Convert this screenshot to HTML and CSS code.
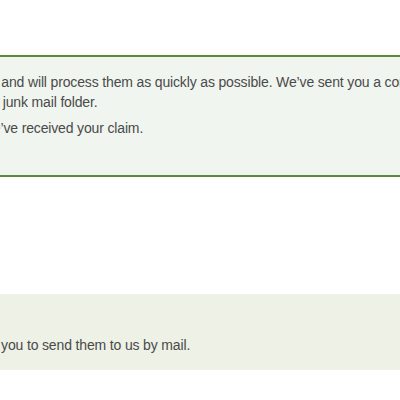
FILE: index.html
```html
<!DOCTYPE html>
<html lang="en">
<head>
    <meta charset="UTF-8">
    <meta name="viewport" content="width=device-width, initial-scale=1.0">
    <title>Claim received</title>
    <link rel="stylesheet" href="styles.css">
</head>
<body>
    <section class="confirm">
        <div class="inner">
            <p>we and will process them as quickly as possible. We’ve sent you a confirmation email.<br>the junk mail folder.</p>
            <p>We’ve received your claim.</p>
        </div>
    </section>

    <section class="next-steps">
        <div class="inner">
            <p>tell you to send them to us by mail.</p>
        </div>
    </section>
</body>
</html>
```

FILE: styles.css
```css
html, body {
    margin: 0;
    padding: 0;
    background-color: #fff;
    overflow: hidden;
}
body {
    font-family: 'Liberation Sans', Arial, sans-serif;
    font-size: 14px;
    line-height: 20px;
    letter-spacing: -0.15px;
    color: #4a4a4a;
    padding-top: 55px;
}
.inner {
    margin-left: -20px;
    white-space: nowrap;
}
.inner p {
    margin: 0;
}
.confirm {
    background-color: #f0f5ef;
    border-top: 2px solid #5a8b3b;
    border-bottom: 2px solid #5a8b3b;
    padding: 15px 0 37px;
    height: 66px;
}
.confirm p + p {
    margin-top: 6px;
}
.next-steps {
    background-color: #edf1e6;
    margin-top: 117px;
    padding: 41px 0 15px;
}
```
